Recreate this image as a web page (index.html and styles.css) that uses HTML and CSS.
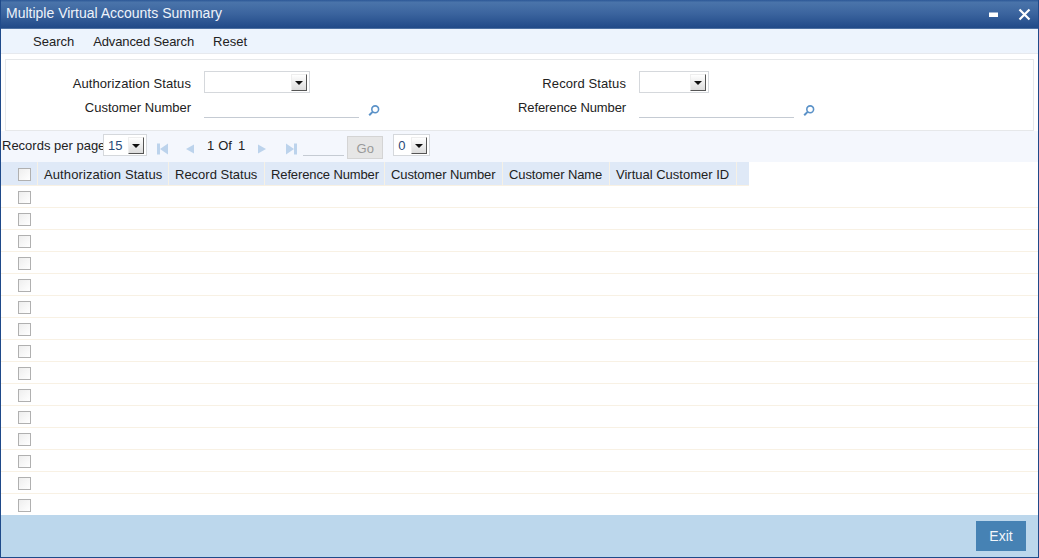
FILE: index.html
```html
<!DOCTYPE html>
<html lang="en">
<head>
  <meta charset="UTF-8">
  <title>Multiple Virtual Accounts Summary</title>
  <link rel="stylesheet" href="styles.css">
</head>
<body>
<div class="ventana">
  <div class="titulo">
    <span>Multiple Virtual Accounts Summary</span>
    <div class="titulo-botones">
      <svg width="12" height="12" viewBox="0 0 12 12"><rect x="1" y="3.500" width="9" height="4.500" fill="#fff"/></svg>
      <svg width="13" height="13" viewBox="0 0 13 13"><path d="M1.500 1.500 L11.500 11.500 M11.500 1.500 L1.500 11.500" stroke="#fff" stroke-width="2.200"/></svg>
    </div>
  </div>

  <div class="barra">
    <a>Search</a>
    <a class="justo">Advanced Search</a>
    <a>Reset</a>
  </div>

  <div class="busqueda">
    <div class="campos campos-izq">
      <label class="ancho">Authorization Status</label>
      <div class="select select-auth"><i class="flecha"></i></div>
      <span></span>
      <label>Customer Number</label>
      <div class="entrada"></div>
      <svg class="lupa" width="12" height="11" viewBox="0 0 12 11"><circle cx="7.200" cy="4.300" r="3.400" fill="none" stroke="#5b92c8" stroke-width="1.600"/><path d="M4.600 6.900 L1.200 10.300" stroke="#5b92c8" stroke-width="2"/></svg>
    </div>
    <div class="campos campos-der">
      <label class="ancho">Record Status</label>
      <div class="select select-rec"><i class="flecha"></i></div>
      <span></span>
      <label class="justo">Reference Number</label>
      <div class="entrada"></div>
      <svg class="lupa" width="12" height="11" viewBox="0 0 12 11"><circle cx="7.200" cy="4.300" r="3.400" fill="none" stroke="#5b92c8" stroke-width="1.600"/><path d="M4.600 6.900 L1.200 10.300" stroke="#5b92c8" stroke-width="2"/></svg>
    </div>
  </div>

  <div class="paginador">
    <span class="por-pagina">Records per page</span>
    <div class="select select-pag"><b>15</b><i class="flecha"></i></div>
    <svg class="nav nav-1" width="12" height="12" viewBox="0 0 12 12"><path d="M0 .5h3v11H0z M11 .5v11L3 6z" fill="#bcd3ec"/></svg>
    <svg class="nav nav-2" width="10" height="12" viewBox="0 0 10 12"><path d="M9 1.500v9L1 6z" fill="#bcd3ec"/></svg>
    <span class="pag-1">1</span><span class="pag-de">Of</span><span class="pag-2">1</span>
    <svg class="nav nav-3" width="10" height="12" viewBox="0 0 10 12"><path d="M1 1.500v9L9 6z" fill="#bcd3ec"/></svg>
    <svg class="nav nav-4" width="12" height="12" viewBox="0 0 12 12"><path d="M12 .5H9v11h3z M1 .5v11L9 6z" fill="#bcd3ec"/></svg>
    <div class="ir-entrada"></div>
    <div class="ir">Go</div>
    <div class="select select-cero"><b>0</b><i class="flecha"></i></div>
  </div>

  <div class="tabla">
    <div class="cabecera">
      <div class="celda-check"><i class="check"></i></div>
      <div class="col col-1 ancho">Authorization Status</div>
      <div class="col col-2">Record Status</div>
      <div class="col col-3 justo">Reference Number</div>
      <div class="col col-4 justo">Customer Number</div>
      <div class="col col-5 justo">Customer Name</div>
      <div class="col col-6">Virtual Customer ID</div>
      <div class="col col-7"></div>
    </div>
    <div class="fila"><i class="check"></i></div>
    <div class="fila"><i class="check"></i></div>
    <div class="fila"><i class="check"></i></div>
    <div class="fila"><i class="check"></i></div>
    <div class="fila"><i class="check"></i></div>
    <div class="fila"><i class="check"></i></div>
    <div class="fila"><i class="check"></i></div>
    <div class="fila"><i class="check"></i></div>
    <div class="fila"><i class="check"></i></div>
    <div class="fila"><i class="check"></i></div>
    <div class="fila"><i class="check"></i></div>
    <div class="fila"><i class="check"></i></div>
    <div class="fila"><i class="check"></i></div>
    <div class="fila"><i class="check"></i></div>
    <div class="fila"><i class="check"></i></div>
  </div>

  <div class="pie">
    <div class="salir">Exit</div>
  </div>
</div>
</body>
</html>
```

FILE: styles.css
```css
* {
  box-sizing: border-box;
}
html, body {
  margin: 0;
  height: 100%;
  overflow: hidden;
}
body {
  font-family: "Liberation Sans", Arial, sans-serif;
  font-size: 13px;
  color: #222;
  background: white;
}
.ancho {
  letter-spacing: .1px;
}
.justo {
  letter-spacing: -.12px;
}
.ventana {
  width: 1039px;
  height: 558px;
  display: flex;
  flex-direction: column;
  border: 1px solid #1f4a8a;
  border-top: 0;
}
.titulo {
  height: 29px;
  flex: none;
  display: flex;
  align-items: center;
  justify-content: space-between;
  padding: 0 7px 0 5px;
  font-size: 14px;
  color: #eef3fa;
  background: linear-gradient(#2c5796 0, #4a74aa 8%, #3c659f 45%, #214a88 96%, #6d8db5 100%);
}
.titulo span {
  margin-bottom: 3px;
}
.titulo-botones {
  display: flex;
  align-items: center;
  gap: 18px;
}
.barra {
  height: 25px;
  flex: none;
  display: flex;
  align-items: center;
  gap: 19px;
  padding: 1px 0 0 32px;
  background: #edf4fd;
  border-bottom: 1px solid #e6e9ee;
}
.busqueda {
  height: 72px;
  flex: none;
  margin: 5px 4px 0 4px;
  padding-top: 11px;
  display: flex;
  background: white;
  border: 1px solid #e6e8ea;
}
.campos {
  display: grid;
  grid-template-rows: 22px 26px;
  align-items: center;
  height: 48px;
}
.campos-izq {
  width: 435px;
  grid-template-columns: 185px 155px 1fr;
  column-gap: 13px;
}
.campos-der {
  grid-template-columns: 185px 155px 1fr;
  column-gap: 13px;
}
.campos label {
  text-align: right;
  padding-top: 3px;
}
.campos .lupa {
  margin: 9px 0 0 -4px;
}
.entrada {
  height: 25px;
  align-self: start;
  border-bottom: 1px solid #c5cbd3;
}
.select {
  height: 22px;
  display: flex;
  align-items: center;
  padding: 0 2px 0 4px;
  background: white;
  border: 1px solid #d5d8dc;
}
.select b {
  font-weight: normal;
  color: #2a4a78;
}
.select-auth {
  width: 106px;
}
.select-rec {
  width: 70px;
}
.select-pag {
  width: 44px;
  flex: none;
}
.select-cero {
  width: 37px;
  flex: none;
  margin-left: 10px;
}
.flecha {
  width: 16px;
  height: 17px;
  flex: none;
  margin-left: auto;
  position: relative;
  background: linear-gradient(#fff, #dcdcdc);
  border: 1px solid;
  border-color: #eee #555 #555 #eee;
}
.flecha::after {
  content: '';
  position: absolute;
  top: 6px;
  left: 3px;
  border: 4px solid transparent;
  border-top: 4px solid #111;
  border-bottom: 0;
}
.paginador {
  height: 31px;
  flex: none;
  display: flex;
  align-items: center;
  padding-bottom: 3px;
  background: #f4f7fd;
}
.por-pagina {
  padding-left: 1px;
  width: 102px;
  flex: none;
  white-space: nowrap;
}
.nav {
  flex: none;
  margin-top: 7px;
}
.nav-1 {
  margin-left: 10px;
}
.nav-2 {
  margin-left: 16px;
}
.nav-3 {
  margin-left: 12px;
}
.nav-4 {
  margin-left: 18px;
}
.pag-1 {
  margin-left: 12px;
}
.pag-de {
  margin-left: 4px;
}
.pag-2 {
  margin-left: 6px;
}
.ir-entrada {
  width: 41px;
  height: 21px;
  margin-left: 6px;
  border-bottom: 1px solid #c5cbd3;
}
.ir {
  width: 36px;
  height: 23px;
  margin: 5px 0 0 3px;
  text-align: center;
  line-height: 23px;
  color: #999;
  background: #e6e6e6;
  border: 1px solid #d4d4d4;
}
.tabla {
  flex: 1;
  min-height: 0;
  overflow: hidden;
  background: white;
}
.cabecera {
  height: 24px;
  display: flex;
  background: #dfe9f7;
  border-bottom: 1px solid #f8f1e4;
  width: 748px;
}
.celda-check {
  width: 36px;
  display: flex;
  align-items: center;
  padding-left: 17px;
}
.col {
  line-height: 24px;
  padding: 1px 0 0 6px;
  white-space: nowrap;
  border-left: 1px solid #f6f1e6;
}
.col-1 { width: 131px; }
.col-2 { width: 96px; }
.col-3 { width: 120px; }
.col-4 { width: 118px; }
.col-5 { width: 107px; }
.col-6 { width: 127px; }
.col-7 { width: 12px; }
.fila {
  height: 22px;
  display: flex;
  align-items: center;
  padding-left: 17px;
  border-bottom: 1px solid #f8f1e4;
}
.fila:last-child {
  border-bottom-color: white;
}
.check {
  display: block;
  width: 13px;
  height: 13px;
  margin-top: 2px;
  background: linear-gradient(135deg, #eeeeee, #fff);
  border: 1px solid #b0b0b0;
}
.pie {
  height: 42px;
  flex: none;
  display: flex;
  justify-content: flex-end;
  padding: 6px 12px 0 0;
  background: #bcd7ec;
}
.salir {
  width: 50px;
  height: 30px;
  font-size: 14px;
  text-align: center;
  line-height: 30px;
  color: #f2f6fa;
  background: #4682b4;
}
```
